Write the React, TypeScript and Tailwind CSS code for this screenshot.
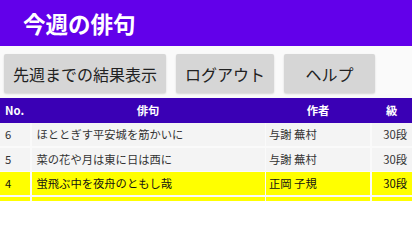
const FONT = "font-['Noto_Sans_CJK_JP','Roboto',sans-serif]";

interface Haiku {
  no: string;
  text: string;
  author: string;
  grade: string;
  highlight?: boolean;
}

const ROWS: Haiku[] = [
  { no: "6", text: "ほととぎす平安城を筋かいに", author: "与謝 蕪村", grade: "30段" },
  { no: "5", text: "菜の花や月は東に日は西に", author: "与謝 蕪村", grade: "30段" },
  { no: "4", text: "蛍飛ぶ中を夜舟のともし哉", author: "正岡 子規", grade: "30段", highlight: true },
  // next row only peeks in at the bottom edge
  { no: "", text: "", author: "", grade: "", highlight: true },
];

const BUTTONS = ["先週までの結果表示", "ログアウト", "ヘルプ"];

const COLS = "grid grid-cols-[30px_233px_104px_1fr] gap-x-[1.5px]";

export default function App() {
  return (
    <div className={`h-[201px] w-[412px] overflow-hidden bg-[#fafafa] ${FONT}`}>
      <header className="flex h-[46px] items-center bg-[#6200ea] pl-[23px]">
        <h1 className="text-[22.5px] font-bold leading-none text-white">今週の俳句</h1>
      </header>

      <div className="flex gap-[10px] pl-[4px] pt-[8px]">
        {BUTTONS.map((label) => (
          <button
            key={label}
            className="h-[39px] min-w-[91px] rounded-[2px] bg-[#d6d6d6] px-[9px] text-[16px] text-[#222] shadow-[0_1px_2px_rgba(0,0,0,0.15)]"
          >
            {label}
          </button>
        ))}
      </div>

      <div className="mt-[5px] text-[11.3px]">
        <div className={`${COLS} h-[25px] items-center bg-[#3a00b5] font-bold text-white`}>
          <span className="pl-[5px]">No.</span>
          <span className="text-center">俳句</span>
          <span className="text-center">作者</span>
          <span className="text-center">級</span>
        </div>
        {ROWS.map((row, i) => {
          const cell = `flex h-[23px] items-center ${row.highlight ? "bg-[#ffff00] text-[#111]" : "bg-[#f4f4f4] text-[#333]"}`;
          return (
            <div key={i} className={`${COLS} ${i === 0 ? "" : "mt-[1.5px]"}`}>
              <span className={`${cell} pl-[5px]`}>{row.no}</span>
              <span className={`${cell} pl-[5px]`}>{row.text}</span>
              <span className={`${cell} pl-[3px]`}>{row.author}</span>
              <span className={`${cell} justify-end pr-[5px]`}>{row.grade}</span>
            </div>
          );
        })}
      </div>
    </div>
  );
}
